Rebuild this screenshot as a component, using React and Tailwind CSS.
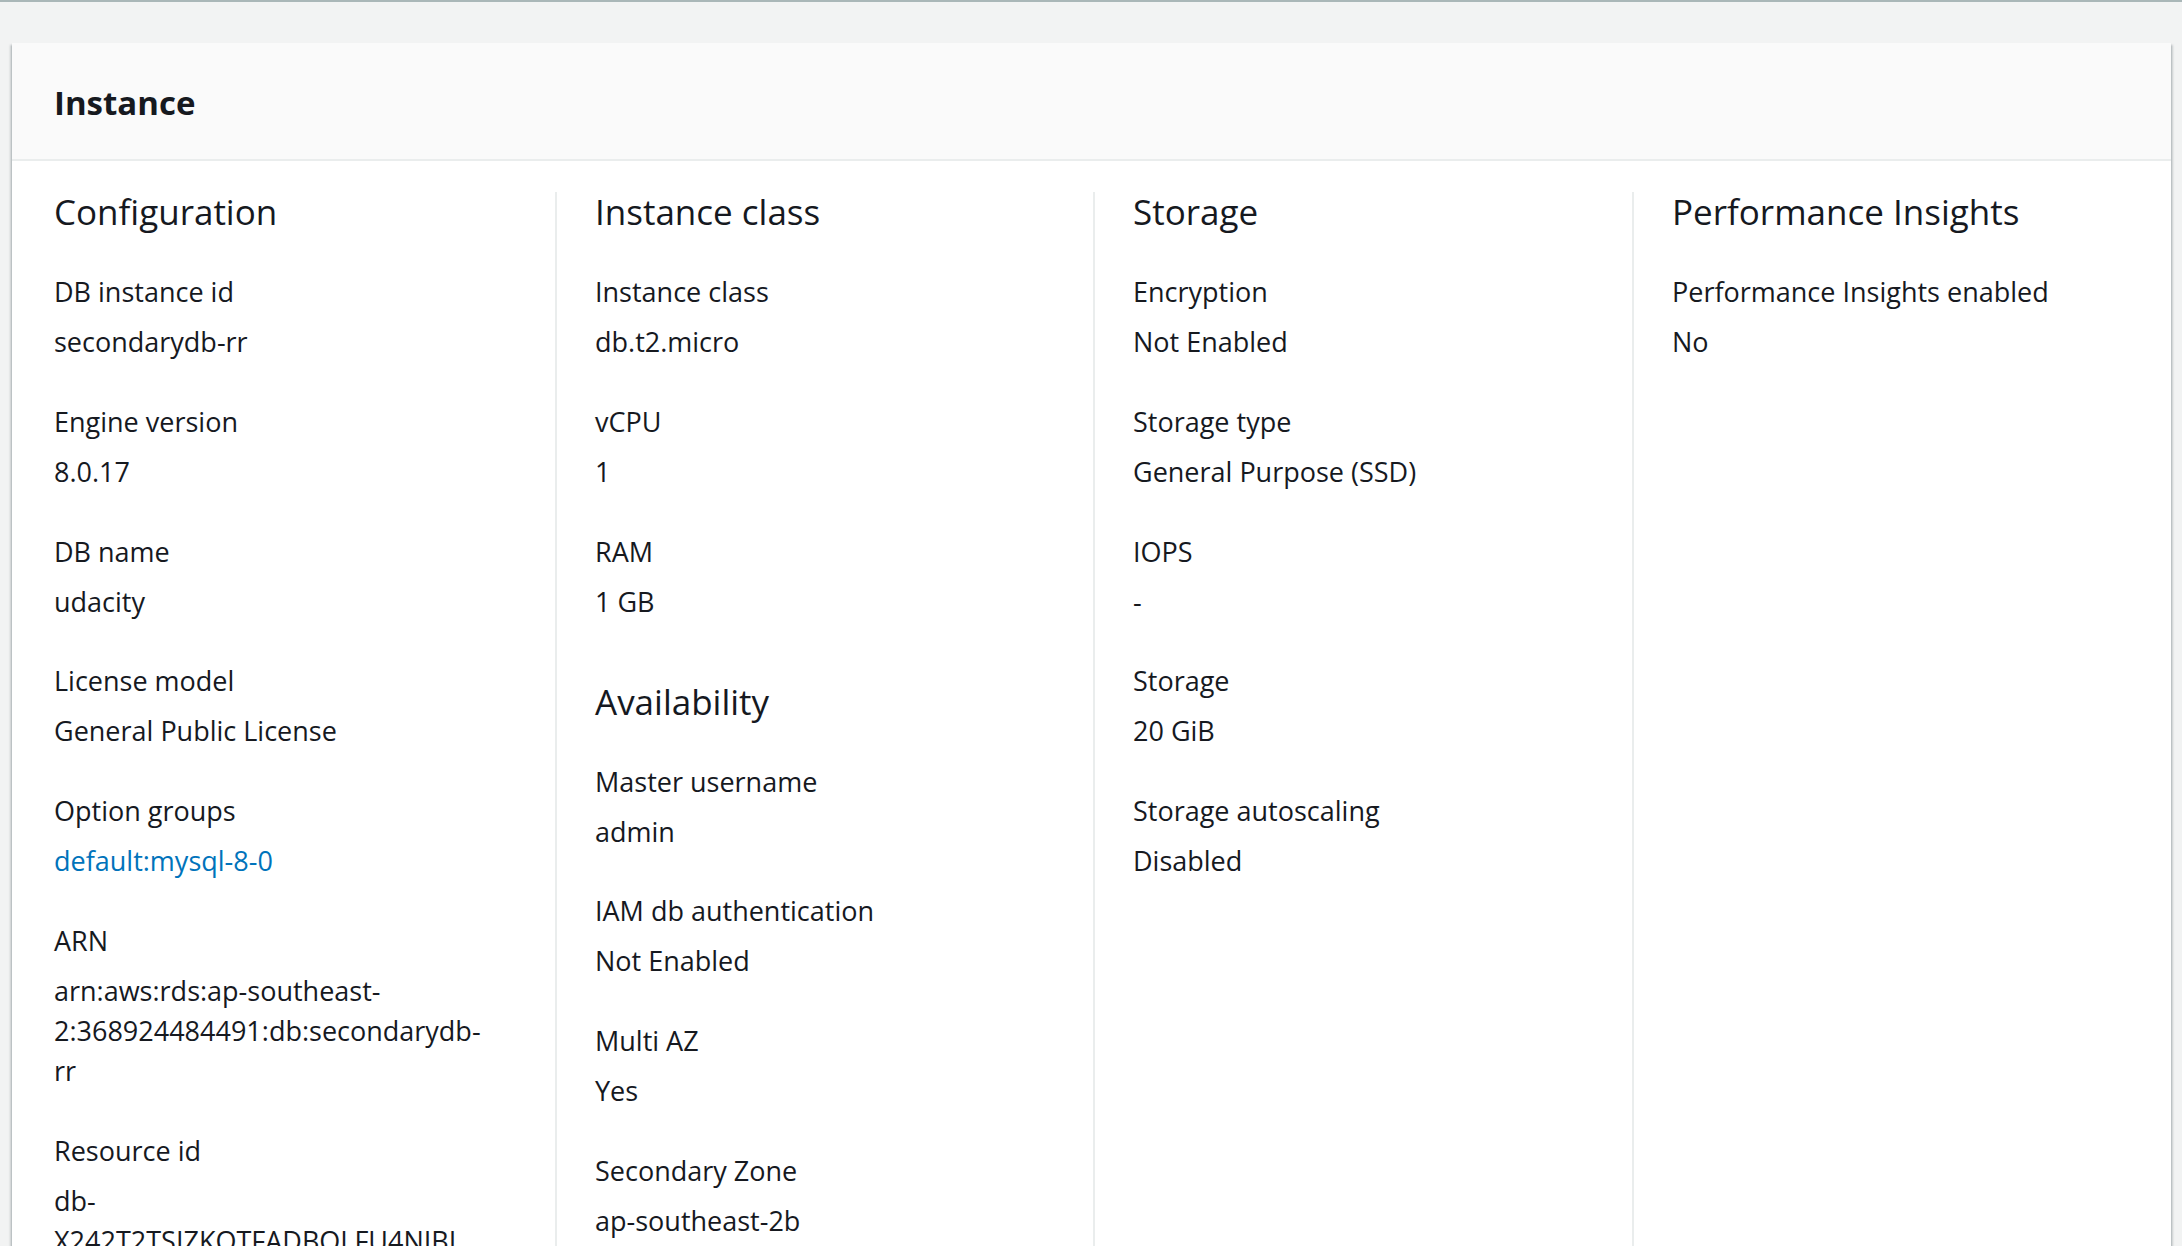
import React from 'react';

const COLUMNS = [
  {
    id: 'config',
    sections: [
      {
        title: 'Configuration',
        items: [
          { label: 'DB instance id', value: 'secondarydb-rr' },
          { label: 'Engine version', value: '8.0.17' },
          { label: 'DB name', value: 'udacity' },
          { label: 'License model', value: 'General Public License' },
          { label: 'Option groups', value: 'default:mysql-8-0', link: true },
          { label: 'ARN', value: 'arn:aws:rds:ap-southeast-2:368924484491:db:secondarydb-rr' },
          { label: 'Resource id', value: 'db-X242T2TSIZKOTFADBQLFU4NIBL' },
        ],
      },
    ],
  },
  {
    id: 'class',
    sections: [
      {
        title: 'Instance class',
        items: [
          { label: 'Instance class', value: 'db.t2.micro' },
          { label: 'vCPU', value: '1' },
          { label: 'RAM', value: '1 GB' },
        ],
      },
      {
        title: 'Availability',
        items: [
          { label: 'Master username', value: 'admin' },
          { label: 'IAM db authentication', value: 'Not Enabled' },
          { label: 'Multi AZ', value: 'Yes' },
          { label: 'Secondary Zone', value: 'ap-southeast-2b' },
        ],
      },
    ],
  },
  {
    id: 'storage',
    sections: [
      {
        title: 'Storage',
        items: [
          { label: 'Encryption', value: 'Not Enabled' },
          { label: 'Storage type', value: 'General Purpose (SSD)' },
          { label: 'IOPS', value: '-' },
          { label: 'Storage', value: '20 GiB' },
          { label: 'Storage autoscaling', value: 'Disabled' },
        ],
      },
    ],
  },
  {
    id: 'pi',
    sections: [
      {
        title: 'Performance Insights',
        items: [{ label: 'Performance Insights enabled', value: 'No' }],
      },
    ],
  },
];

const KeyValue = ({ label, value, link }) => (
  <div className="flex flex-col gap-[10px]">
    <div className="text-[27px] leading-[40px]">{label}</div>
    {link ? (
      <a href="#" className="text-[27px] leading-[40px] text-[#0073bb] no-underline">
        {value}
      </a>
    ) : (
      <div className="text-[27px] leading-[40px] break-words">{value}</div>
    )}
  </div>
);

const Column = ({ column, first }) => (
  <div
    className={
      first
        ? 'pl-[42px] pr-[60px] flex flex-col gap-[60px] min-w-0'
        : 'pl-[38px] pr-[40px] border-l-2 border-[#eaeded] flex flex-col gap-[60px] min-w-0'
    }
  >
    {column.sections.map((section) => (
      <div key={section.title} className="flex flex-col">
        <h3 className="text-[35px] leading-[40px] font-normal mb-[40px]">{section.title}</h3>
        <div className="flex flex-col gap-[39.75px]">
          {section.items.map((item) => (
            <KeyValue key={item.label + item.value} {...item} />
          ))}
        </div>
      </div>
    ))}
  </div>
);

export default function App() {
  return (
    <div className="min-h-screen bg-[#f2f3f3] font-['Open_Sans',sans-serif] text-[#16191f]">
      <div className="h-[2px] bg-[#aab7b8]" />
      <div className="pt-[41px] pl-[12px] pr-[11px] pb-10">
        <div className="bg-white shadow-[0_2px_2px_0_rgba(0,28,36,0.3),2px_2px_2px_0_rgba(0,28,36,0.15),-2px_2px_2px_0_rgba(0,28,36,0.15)]">
          {/* Header */}
          <div className="h-[118px] bg-[#fafafa] border-b-2 border-[#eaeded] flex items-center pl-[42px] pt-[4px]">
            <h2 className="text-[33px] font-bold leading-[40px]">Instance</h2>
          </div>

          {/* Columns */}
          <div className="grid grid-cols-[543px_538px_539px_1fr] pt-[31px] pb-[40px]">
            {COLUMNS.map((column, i) => (
              <Column key={column.id} column={column} first={i === 0} />
            ))}
          </div>
        </div>
      </div>
    </div>
  );
}
